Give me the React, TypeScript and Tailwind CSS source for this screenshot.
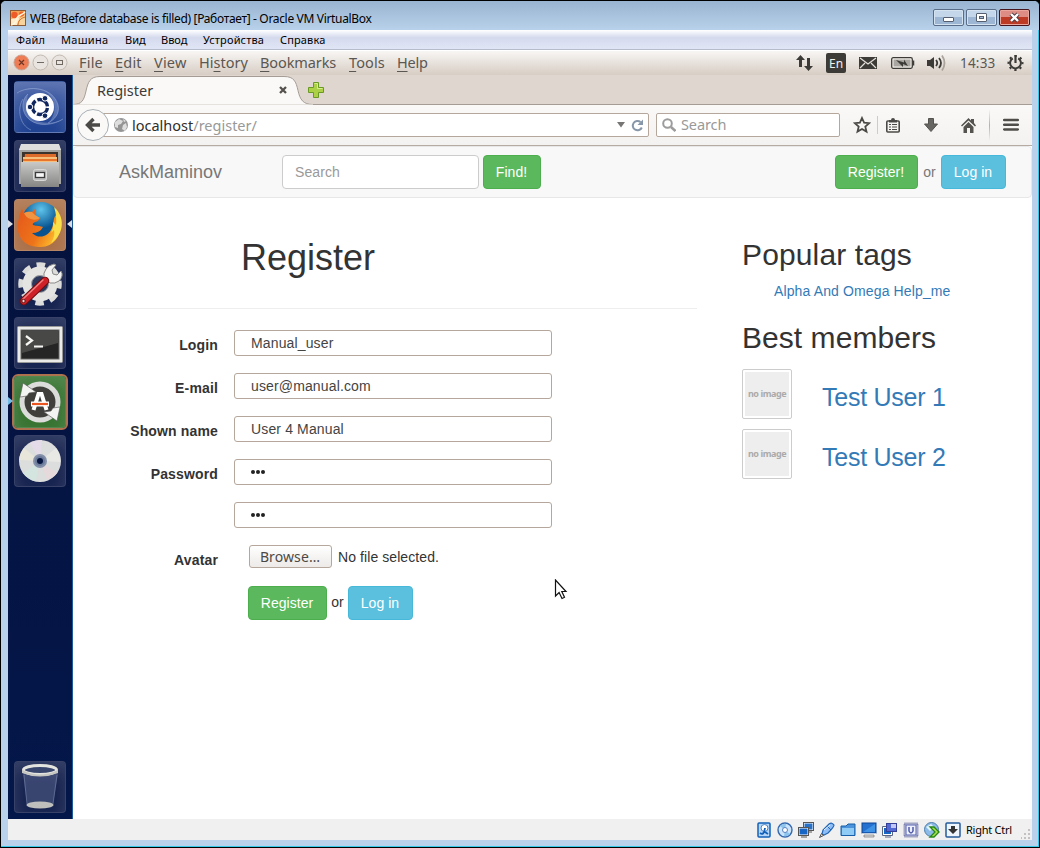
import type { ReactNode } from "react";

const ui = "font-['Noto_Sans',sans-serif]";
const page = "font-['Liberation_Sans',Arial,sans-serif]";

function TitleBar() {
  return (
    <div className="flex h-[29px] shrink-0 items-start bg-linear-to-b from-[#99b4d1] to-[#b9d1ea] pl-[9px] pr-[9px]">
      <svg className="mt-[9px] mr-[4px]" width="16" height="16" viewBox="0 0 16 16">
        <rect x=".5" y=".5" width="15" height="15" fill="#f3a557" stroke="#8c5a35" />
        <path d="M1 9v6h6l3-8z" fill="#fdeccb" />
        <path d="M8 15l2-7 5-3v10z" fill="#f9d39c" />
        <circle cx="4.500" cy="5" r="3.200" fill="#ef5b28" />
        <circle cx="11.500" cy="4" r="2.500" fill="#f0642c" />
        <path d="M1 15c5-1 5-4 6-7s4-2 8-6" stroke="#fff6dd" strokeWidth="1.500" fill="none" />
        <path d="M8 15q0-6 7-8" stroke="#d3762f" strokeWidth="1" fill="none" />
      </svg>
      <span className="mt-[9px] font-['Noto_Sans',sans-serif] text-[12px] leading-[17px] tracking-[-0.33px] whitespace-nowrap text-black">
        WEB (Before database is filled) [Работает] - Oracle VM VirtualBox
      </span>
      <div className="mt-[8px] ml-auto flex gap-[2px]">
        <div className="flex h-[17px] w-[31px] items-center justify-center rounded-[2px] border border-[#596d88] bg-linear-to-b from-[#c4d6e9] from-50% to-[#9cb6d3] to-50% shadow-[inset_0_0_0_1px_#d5e3f1]">
          <span className="mt-[4px] h-[5px] w-[11px] rounded-[1px] border border-[#555f70] bg-white" />
        </div>
        <div className="flex h-[17px] w-[31px] items-center justify-center rounded-[2px] border border-[#596d88] bg-linear-to-b from-[#c4d6e9] from-50% to-[#9cb6d3] to-50% shadow-[inset_0_0_0_1px_#d5e3f1]">
          <span className="flex h-[9px] w-[11px] items-center justify-center rounded-[1px] border border-[#555f70] bg-white">
            <span className="h-[3px] w-[5px] border border-[#555f70] bg-[#a5bdd8]" />
          </span>
        </div>
        <div className="flex h-[17px] w-[31px] items-center justify-center rounded-[2px] border border-[#46141c] bg-linear-to-b from-[#dd8d84] from-50% to-[#bd3b25] to-50% shadow-[inset_0_0_0_1px_#e9a79d]">
          <svg width="13" height="11" viewBox="0 0 13 11">
            <path d="M3 2l7 7M10 2l-7 7" stroke="#4b3a44" strokeWidth="4.200" />
            <path d="M3 2l7 7M10 2l-7 7" stroke="#fff" strokeWidth="2.400" />
          </svg>
        </div>
      </div>
    </div>
  );
}

function HostMenu() {
  return (
    <div className="flex h-[20px] shrink-0 border-b border-[#b6bccc] bg-linear-to-b from-white via-[#d4daed] via-40% to-[#e1e6f6] font-['Noto_Sans',sans-serif] text-[11px] leading-[19px] whitespace-nowrap text-black">
      <span className="ml-[8px] w-[45px] tracking-[0.2px]">Файл</span>
      <span className="w-[64px] tracking-[0.3px]">Машина</span>
      <span className="w-[36px]">Вид</span>
      <span className="w-[42px]">Ввод</span>
      <span className="w-[77px] tracking-[0.15px]">Устройства</span>
      <span className="tracking-[0.15px]">Справка</span>
    </div>
  );
}

function Menu({ k, rest, pre, w }: { k: string; rest: string; pre?: string; w: string }) {
  return (
    <span className={w}>
      {pre}
      <span className="underline decoration-1 underline-offset-[3px]">{k}</span>
      {rest}
    </span>
  );
}

function Panel() {
  return (
    <div className="flex h-[24px] shrink-0 items-center bg-linear-to-b from-[#f8f6f4] to-[#d7cdc4] text-[#5b5752]">
      <svg className="ml-[5px] shrink-0" width="56" height="18" viewBox="0 0 56 18">
        <circle cx="8.500" cy="8.500" r="7.500" fill="#ee7c55" stroke="#c9a596" />
        <path d="M6 6l5 5M11 6l-5 5" stroke="#713523" strokeWidth="1.200" />
        <circle cx="27.500" cy="8.500" r="7.500" fill="#e9e4df" stroke="#c2b9b0" />
        <path d="M24 8.500h7" stroke="#6f6962" />
        <circle cx="46.500" cy="8.500" r="7.500" fill="#e9e4df" stroke="#c2b9b0" />
        <rect x="43.500" y="6.500" width="6" height="4" fill="none" stroke="#6f6962" />
      </svg>
      <div className={`${ui} mb-[2px] ml-[10px] flex text-[14.500px] leading-[20px] whitespace-nowrap`}>
        <Menu k="F" rest="ile" w="w-[36px] tracking-[0.2px]" />
        <Menu k="E" rest="dit" w="w-[39px] tracking-[0.2px]" />
        <Menu k="V" rest="iew" w="w-[45px] tracking-[0.2px]" />
        <Menu pre="Hi" k="s" rest="tory" w="w-[61px]" />
        <Menu k="B" rest="ookmarks" w="w-[89px] tracking-[-0.1px]" />
        <Menu k="T" rest="ools" w="w-[48px] tracking-[0.1px]" />
        <Menu k="H" rest="elp" w="w-[34px] tracking-[-0.2px]" />
      </div>
      <svg className="-mr-[1px] ml-auto" width="19" height="18" viewBox="0 0 19 18">
        <path d="M5.500 1L1 6h3v7h3V6h3zM13.500 17l4.500-5h-3V4h-3v8H9z" fill="#3c3b37" />
      </svg>
      <span className={`${ui} ml-[13px] h-[20px] w-[20px] rounded-[2px] bg-[#3c3b37] text-center text-[12px] leading-[21px] text-[#f2f0ee]`}>En</span>
      <svg className="ml-[13px]" width="18" height="12" viewBox="0 0 18 12">
        <rect width="18" height="12" fill="#3c3b37" />
        <path d="M1 1l8 6 8-6M1 11l5-5M17 11l-5-5" stroke="#e5dfda" strokeWidth="1.200" fill="none" />
      </svg>
      <svg className="ml-[14px]" width="24" height="12" viewBox="0 0 24 12">
        <rect x=".7" y=".7" width="20.600" height="10.600" rx="1.500" fill="#f4f1ed" stroke="#3c3b37" strokeWidth="1.300" />
        <path d="M2.500 2.500h17v7h-17z" fill="#aaa6a1" />
        <path d="M5 3l8 2.500V2.500L17 9l-5-2v3z" fill="#3c3b37" />
        <path d="M22.500 3.500v5" stroke="#3c3b37" strokeWidth="1.500" />
      </svg>
      <svg className="ml-[12px]" width="20" height="18" viewBox="0 0 20 18">
        <path d="M0 6h3l4-3v12l-4-3H0z" fill="#3c3b37" />
        <path d="M9 6q2.500 3 0 6M12 4q4 5 0 10" stroke="#3c3b37" strokeWidth="1.800" fill="none" />
        <path d="M15 1.500q5 7.500 0 15" stroke="#aaa49d" strokeWidth="1.800" fill="none" />
      </svg>
      <span className={`${ui} mb-[1px] ml-[13px] w-[36px] text-[13.500px] leading-[20px] tracking-[0.2px]`}>14:33</span>
      <svg className="mr-[8px] ml-[11px]" width="17" height="18" viewBox="0 0 17 18">
        <circle cx="8.500" cy="9" r="7" fill="none" stroke="#3c3b37" strokeWidth="2" strokeDasharray="2.200 3.300" strokeDashoffset="1.100" />
        <path d="M5.800 4.300a5.400 5.400 0 1 0 5.400 0" fill="none" stroke="#3c3b37" strokeWidth="2" />
        <path d="M8.500 1v8" stroke="#3c3b37" strokeWidth="2.200" />
      </svg>
    </div>
  );
}

function Tile({ children, bg = "bg-[#16224f]", glow = "" }: { children: ReactNode; bg?: string; glow?: string }) {
  return (
    <div className={`${bg} ${glow} flex h-[52px] w-[52px] shrink-0 items-center justify-center rounded-[4px] border border-white/15 shadow-[inset_0_8px_16px_rgba(255,255,255,0.14)]`}>
      {children}
    </div>
  );
}

function Launcher() {
  return (
    <div className="relative flex w-[65px] shrink-0 flex-col items-center gap-[7px] border-r border-[#1b5b9a] bg-linear-to-b from-[#04103a] to-[#04174a] pt-[6px] pb-[6px]">
      <Tile bg="bg-linear-to-b from-[#4963a8] to-[#1c3f90]">
        <svg width="50" height="50" viewBox="0 0 50 50">
          <path d="M2 11C14 3 38 5 43 23c2 9-4 15-10 18 9-8 9-24-2-31C22 5 9 7 2 11zM48 37c-9 6-24 8-33 1C7 32 5 19 13 12c-3 12 2 25 13 28 8 2 16 0 22-3z" fill="#a6b8df" opacity=".35" />
          <path d="M2 11C14 3 38 5 43 23c2 9-4 15-10 18M48 37c-9 6-24 8-33 1C7 32 5 19 13 12M16 48C4 43 2 26 8 17" stroke="#9fb3de" strokeOpacity=".5" fill="none" />
          <circle cx="25" cy="25" r="14" fill="#fff" />
          <circle cx="25" cy="25" r="7.500" fill="none" stroke="#10265e" strokeWidth="3.400" strokeDasharray="13.700 2" strokeDashoffset="-1" />
          <g fill="#10265e" stroke="#fff">
            <circle cx="15" cy="25" r="2.800" />
            <circle cx="30" cy="16.300" r="2.800" />
            <circle cx="30" cy="33.700" r="2.800" />
          </g>
        </svg>
      </Tile>
      <Tile>
        <svg width="50" height="50" viewBox="0 0 50 50">
          <path d="M6 4h38l2 5v34H4V9z" fill="#a3a4a2" />
          <path d="M6 3h38l2 6H4z" fill="#dedfdd" />
          <path d="M7 11h36v12H7z" fill="#3d332d" />
          <path d="M10 13h31v9H9z" fill="#df6b2b" />
          <path d="M8 16h34v6H8z" fill="#f6c07c" />
          <path d="M8 18h34v2H8z" fill="#e9752d" />
          <path d="M6 21h38v25H6z" fill="url(#cab)" />
          <rect x="18.500" y="28.500" width="13" height="11" rx="2" fill="#bbb" stroke="#d9d9d7" />
          <rect x="20.500" y="31.500" width="9" height="5" fill="#f8f8f8" stroke="#3c3c3c" strokeWidth="1.300" />
          <defs>
            <linearGradient id="cab" x2="0" y2="1"><stop stopColor="#c9c9c7" /><stop offset="1" stopColor="#858684" /></linearGradient>
          </defs>
        </svg>
      </Tile>
      <Tile bg="bg-[#ab7048]">
        <svg width="50" height="50" viewBox="0 0 50 50">
          <defs>
            <radialGradient id="globe" cx=".5" cy=".2"><stop stopColor="#5fc5ec" /><stop offset="1" stopColor="#07528f" /></radialGradient>
            <linearGradient id="fox" x2="1" y2=".5"><stop stopColor="#e4571c" /><stop offset=".65" stopColor="#ed7419" /><stop offset="1" stopColor="#fbb42a" /></linearGradient>
          </defs>
          <circle cx="26" cy="21" r="19" fill="url(#globe)" />
          <path d="M4 18C4 15 6 11 7 9l2 4q4-2 8-1l4-4-1 7 5 3q-1 3-5 4-3 1-2 3 3 1 6 1l4 1q-3 6-11 6c7 7 17 3 20-5 2-5 1-10 4-13 8 11 4 31-15 32C8 48-1 34 4 18z" fill="url(#fox)" />
          <path d="M39 7c11 9 11 27-3 36 3-5 4-9 3-13l-3 3q3-6 2-11l3 3q1-9-2-18z" fill="#fbdf4a" />
          <path d="M9 13q4-2 8-1l3 3 5 3q-4 3-9 1-5-1-7-6z" fill="#f29543" />
        </svg>
      </Tile>
      <Tile>
        <svg width="50" height="50" viewBox="0 0 50 50">
          <circle cx="25" cy="25" r="19" fill="none" stroke="#dcdddb" strokeWidth="5.500" strokeDasharray="8.500 6.420" strokeDashoffset="4" />
          <circle cx="25" cy="25" r="13" fill="none" stroke="#e4e4e2" strokeWidth="9" />
          <circle cx="25" cy="25" r="8.500" fill="#2c375c" stroke="#aaa" />
          <path d="M29 19q-1-5 2-9t8-5l2 1-4 5 1 4 4 1 4-4q3 5-2 10-4 3-9 2z" fill="#f2f2f0" stroke="#898a88" />
          <path d="M9 42L30 22" stroke="#6e0e12" strokeWidth="8.500" strokeLinecap="round" />
          <path d="M9 42L30 22" stroke="#cf2228" strokeWidth="6.500" strokeLinecap="round" />
          <path d="M8 40L28 21" stroke="#f18182" strokeWidth="1.500" strokeLinecap="round" />
          <circle cx="8.500" cy="42" r="1.700" fill="#f0dada" stroke="#631013" />
        </svg>
      </Tile>
      <Tile>
        <svg width="50" height="50" viewBox="0 0 50 50">
          <rect x="2.500" y="8.500" width="45" height="36" rx="1" fill="#eaeae8" stroke="#999" />
          <rect x="6" y="12" width="38" height="29" fill="#252525" stroke="#666" />
          <path d="M7 13h36v12L7 35z" fill="#484846" />
          <path d="M11 18l6 4.500-6 4.500M19 28.500h9" stroke="#f6f6f4" strokeWidth="2.200" fill="none" />
        </svg>
      </Tile>
      <Tile bg="bg-[#377331]" glow="outline-2 outline-[#d88951]/80">
        <svg width="50" height="50" viewBox="0 0 50 50">
          <circle cx="25" cy="25" r="16" fill="#403f3c" />
          <circle cx="25" cy="25" r="18" fill="none" stroke="#dcdcda" strokeWidth="5" />
          <path d="M5 20L8 6l13 9-7 1-2 3z" fill="#f4f4f2" stroke="#555" strokeWidth=".6" />
          <path d="M45 30l-3 14-13-9 7-1 2-3z" fill="#f4f4f2" stroke="#555" strokeWidth=".6" />
          <path d="M18.500 33l5-16h3l5 16" fill="none" stroke="#fff" strokeWidth="4" />
          <path d="M16 27h18" stroke="#fff" strokeWidth="5" />
          <path d="M17 27h16" stroke="#ea5722" strokeWidth="2.200" />
        </svg>
      </Tile>
      <Tile>
        <svg width="50" height="50" viewBox="0 0 50 50">
          <circle cx="25" cy="25" r="21" fill="#dcdddd" />
          <path d="M25 25L15 7q5-3 12-3z" fill="#e4dce8" />
          <path d="M25 25L9 12q-4 5-5 12z" fill="#e8e5da" />
          <path d="M25 25L8 37q5 7 13 8z" fill="#d4e4df" />
          <path d="M25 25l17 12q-4 5-10 7z" fill="#e5d9dc" />
          <path d="M25 25L41 12q5 7 4 14z" fill="#e8e9e4" />
          <circle cx="25" cy="25" r="7" fill="#8490aa" />
          <circle cx="25" cy="25" r="5" fill="#6d7b9b" />
          <circle cx="25" cy="25" r="3" fill="#071640" />
        </svg>
      </Tile>
      <div className="mt-auto">
        <Tile>
          <svg width="50" height="50" viewBox="0 0 50 50">
            <path d="M8 11h35l-5 32H12z" fill="#8290b4" opacity=".32" />
            <path d="M9 13l3 29M42 13l-4 29" stroke="#8190b4" opacity=".5" fill="none" />
            <ellipse cx="25" cy="43" rx="13.500" ry="3.500" fill="#bfc0bd" />
            <ellipse cx="25" cy="8" rx="16.500" ry="4.500" fill="#38456d" stroke="#e4e4df" strokeWidth="3" />
            <path d="M7 8q18 9 36 0v3q-18 7-36 0z" fill="#c6c7c2" />
          </svg>
        </Tile>
      </div>
      <span className="absolute top-[145px] left-0 border-y-4 border-l-5 border-y-transparent border-l-[#d9dde5]" />
      <span className="absolute top-[145px] right-0 border-y-4 border-r-5 border-y-transparent border-r-[#d9dde5]" />
      <span className="absolute top-[322px] left-0 border-y-4 border-l-5 border-y-transparent border-l-[#72bde7]" />
    </div>
  );
}

function TabStrip() {
  return (
    <div className="relative h-[30px] shrink-0 border-b border-[#a59d95] bg-[#dfd6cf]">
      <svg className="absolute top-0 left-0" width="245" height="30" viewBox="0 0 245 30">
        <path d="M0 29.500C9 29.500 11 25 13 16S17 1.500 27 1.500H211c10 0 12 5 14 14s5 14 15 14" fill="#faf9f7" stroke="#a59d95" />
        <path d="M0 30h240" stroke="#faf9f7" />
      </svg>
      <div className="relative flex h-full items-center">
        <span className={`${ui} ml-[24px] w-[182px] text-[14.500px] leading-[20px] text-[#3c3b37]`}>Register</span>
        <svg width="8" height="8" viewBox="0 0 8 8"><path d="M1 1l6 6M7 1L1 7" stroke="#55524e" strokeWidth="2.300" /></svg>
        <svg className="mt-px ml-[21px]" width="16" height="16" viewBox="0 0 16 16">
          <path d="M5.500.5h5v5h5v5h-5v5h-5v-5h-5v-5h5z" fill="#acd046" stroke="#6b9a24" />
          <path d="M6.500 1.500h3v5h5" stroke="#d7eb92" fill="none" />
        </svg>
      </div>
    </div>
  );
}

function NavBar() {
  return (
    <div className="flex h-[41px] shrink-0 items-center border-b border-[#b5aba2] bg-linear-to-b from-[#faf9f7] to-[#f4f2f0]">
      <div className="z-10 ml-[4px] flex h-[32px] w-[32px] shrink-0 items-center justify-center rounded-full border border-[#a9b1b7] bg-[#faf9f7]">
        <svg width="16" height="16" viewBox="0 0 16 16"><path d="M15 8H3M8.500 2l-6 6 6 6" stroke="#4b4a47" strokeWidth="3.400" fill="none" /></svg>
      </div>
      <div className={`${ui} -ml-[6px] flex h-[24px] w-[546px] items-center rounded-r-[2px] border border-[#b5a79b] bg-white text-[14.500px]`}>
        <svg className="ml-[10px]" width="14" height="14" viewBox="0 0 14 14">
          <circle cx="7" cy="7" r="7" fill="#959595" />
          <path d="M1 4l4-3 4 2-2 3-3 1v3L1 9zM9 7l3-2 1 4-2 4-3-2zM9 1l3 2-2 1z" fill="#dedede" />
        </svg>
        <span className="ml-[4px] leading-[20px] text-[#2f2e2b]">localhost<span className="text-[#999]">/register/</span></span>
        <svg className="ml-auto" width="8" height="6" viewBox="0 0 8 6"><path d="M0 0h8L4 5.500z" fill="#777674" /></svg>
        <svg className="mr-[4px] ml-[6px]" width="13" height="13" viewBox="0 0 13 13">
          <path d="M10.800 8.500A4.700 4.700 0 1 1 9.500 3" fill="none" stroke="#8796a8" strokeWidth="2" />
          <path d="M12 .5v5.500H6.500z" fill="#8796a8" />
        </svg>
      </div>
      <div className={`${ui} ml-[7px] flex h-[24px] w-[184px] items-center rounded-[2px] border border-[#b5a79b] bg-white text-[14.500px] tracking-[-0.1px] text-[#999]`}>
        <svg className="mr-[5px] ml-[5px]" width="14" height="14" viewBox="0 0 14 14"><circle cx="5.500" cy="5.500" r="4.300" fill="none" stroke="#9c9c9c" strokeWidth="2" /><path d="M9 9l4.500 4" stroke="#9c9c9c" strokeWidth="2.600" /></svg>
        Search
      </div>
      <svg className="ml-[13px]" width="18" height="18" viewBox="0 0 18 18"><path d="M9 2l2.100 4.700 5.100.5-3.900 3.400 1.200 5L9 13l-4.500 2.600 1.200-5-3.900-3.400 5.100-.5z" fill="none" stroke="#4b4a47" strokeWidth="1.800" /></svg>
      <span className="ml-[6px] h-[18px] w-px bg-[#cfcbc8]" />
      <svg className="ml-[8px]" width="14" height="15" viewBox="0 0 14 15">
        <rect x=".8" y="3" width="12.400" height="11" rx="1" fill="#f6f4f2" stroke="#4b4a47" strokeWidth="1.600" />
        <path d="M3 4.500h8V2H9a2 2 0 0 0-4 0H3z" fill="#4b4a47" />
        <path d="M3 6.500h2M6 6.500h5M3 9h2M6 9h5M3 11.500h2M6 11.500h5" stroke="#4b4a47" strokeWidth="1.200" />
      </svg>
      <svg className="ml-[24px]" width="14" height="14" viewBox="0 0 14 14"><path d="M4.500.5h5V6h4L7 13.500.5 6h4z" fill="#686663" stroke="#55534f" /></svg>
      <svg className="ml-[23px]" width="15" height="15" viewBox="0 0 15 15"><path d="M7.500 0L10 2.500V1h3v4l2 2.500-1 1-6.500-6-6.500 6-1-1zM2.500 9l5-5 5 5v6H9v-5H6v5H2.500z" fill="#55534f" /></svg>
      <span className="ml-[13px] h-[31px] w-px bg-linear-to-b from-[#f5f3f1] via-[#a9b3bf] to-[#f5f3f1]" />
      <svg className="ml-[13px]" width="16" height="14" viewBox="0 0 16 14"><path d="M1.200 2h13.600M1.200 6.700h13.600M1.200 11.400h13.600" stroke="#4f4d4a" strokeWidth="2.500" strokeLinecap="round" /></svg>
    </div>
  );
}

const btn = "flex h-[34px] shrink-0 items-center justify-center rounded-[4px] border pr-px text-[14px] leading-[20px] text-white tracking-[0.05px]";
const green = "border-[#4cae4c] bg-[#5cb85c]";
const cyan = "border-[#46b8da] bg-[#5bc0de]";

function Field({ label, value }: { label: string; value: string }) {
  return (
    <div className="mb-[17px] flex h-[26px]">
      <label className="mr-[16px] w-[145px] pt-[5px] text-right leading-[20px] font-bold tracking-[0.15px]">{label}</label>
      <div className="w-[318px] rounded-[3px] border border-[#b5a79b] pl-[16px] leading-[24px] tracking-[0.14px] text-[#444]">
        {value === "dots" ? (
          <span className="flex h-[24px] items-center gap-[1px] pb-[1px]">
            <i className="h-1 w-1 rounded-full bg-[#222]" />
            <i className="h-1 w-1 rounded-full bg-[#222]" />
            <i className="h-1 w-1 rounded-full bg-[#222]" />
          </span>
        ) : value}
      </div>
    </div>
  );
}

function Member({ name }: { name: string }) {
  return (
    <div className="mb-[10px] flex h-[50px]">
      <div className="h-[50px] w-[50px] rounded-[2px] border border-[#ccc] p-[2px]">
        <div className="flex h-full items-center justify-center bg-[#eee] font-['Noto_Sans',sans-serif] text-[9px] font-bold tracking-[-0.45px] whitespace-nowrap text-[#aaa]">no image</div>
      </div>
      <span className="ml-[30px] pt-[13px] text-[25px] leading-[30px] tracking-[-0.25px] whitespace-nowrap text-[#337ab7]">{name}</span>
    </div>
  );
}

function Site() {
  return (
    <div className={`${page} flex flex-1 flex-col bg-white text-[14px] text-[#333]`}>
      <div className="flex h-[52px] shrink-0 items-center rounded-[4px] border border-[#e7e7e7] bg-[#f8f8f8] text-[#777]">
        <span className="ml-[45px] w-[163px] text-[18px]">AskMaminov</span>
        <div className="h-[34px] w-[197px] rounded-[4px] border border-[#ccc] bg-white pl-[12px] leading-[32px] tracking-[0.1px] text-[#999]">Search</div>
        <span className={`${btn} ${green} ml-[4px] w-[58px]`}>Find!</span>
        <span className={`${btn} ${green} ml-auto w-[83px]`}>Register!</span>
        <span className="w-[23px] text-center">or</span>
        <span className={`${btn} ${cyan} mr-[25px] w-[65px]`}>Log in</span>
      </div>
      <div className="flex">
        <div className="ml-[15px] w-[609px]">
          <h1 className="h-[111px] border-b border-[#eee] pt-[40px] pl-[153px] text-[36px] leading-[40px]">Register</h1>
          <div className="-ml-[15px] pt-[21px]">
            <Field label="Login" value="Manual_user" />
            <Field label="E-mail" value="user@manual.com" />
            <Field label="Shown name" value="User 4 Manual" />
            <Field label="Password" value="dots" />
            <Field label="" value="dots" />
            <div className="flex h-[26px]">
              <label className="mr-[31px] w-[145px] pt-[5px] text-right leading-[20px] font-bold tracking-[0.15px]">Avatar</label>
              <span className="h-[23px] w-[83px] rounded-[3px] border border-[#b5a79b] bg-linear-to-b from-white to-[#edeae8] pr-px text-center font-['Noto_Sans',sans-serif] text-[14px] leading-[22px] tracking-[0.1px] text-[#4c4945]">Browse…</span>
              <span className="ml-[6px] leading-[24px] tracking-[0.08px]">No file selected.</span>
            </div>
            <div className="mt-[15px] ml-[175px] flex items-center">
              <span className={`${btn} ${green} w-[79px]`}>Register</span>
              <span className="w-[21px] pb-px text-center">or</span>
              <span className={`${btn} ${cyan} w-[65px]`}>Log in</span>
            </div>
          </div>
        </div>
        <div className="ml-[45px] pt-[40px]">
          <h2 className="text-[30px] leading-[33px] tracking-[0.13px] whitespace-nowrap">Popular tags</h2>
          <div className="ml-[32px] flex h-[40px] gap-[4px] pt-[10px] leading-[20px] tracking-[0.13px] whitespace-nowrap text-[#337ab7]">
            <span>Alpha And Omega</span><span>Help_me</span>
          </div>
          <h2 className="mt-[10px] mb-[15px] text-[30px] leading-[33px] tracking-[0.05px] whitespace-nowrap">Best members</h2>
          <Member name="Test User 1" />
          <Member name="Test User 2" />
        </div>
      </div>
    </div>
  );
}

function StatusBar() {
  return (
    <div className="flex h-[21px] shrink-0 items-center justify-end bg-[#f0f0f0]">
      <div className="flex gap-[5px]">
        <svg width="16" height="16" viewBox="0 0 16 16"><rect x="2" y="1" width="12" height="14" rx="1" fill="#b5d6f8" stroke="#1260b8" strokeWidth="1.500" /><circle cx="8.500" cy="6" r="3.500" fill="#fff" stroke="#4d83be" /><path d="M4 11q4 3 5-5M9 10l3 2" fill="none" stroke="#1260b8" strokeWidth="1.800" /></svg>
        <svg width="16" height="16" viewBox="0 0 16 16"><circle cx="8" cy="8" r="7" fill="#cae5fb" stroke="#3568af" strokeWidth="1.400" /><path d="M8 8L3 4q3-3 6-2zM8 8l5 4q-3 3-6 2z" fill="#8dc4ed" /><circle cx="8" cy="8" r="2.500" fill="#fff" stroke="#5883bf" /></svg>
        <svg width="16" height="16" viewBox="0 0 16 16"><rect x="6" y="1" width="9" height="7" fill="#2871c8" stroke="#fff" /><rect x="5.500" y=".5" width="10" height="8" fill="none" stroke="#555" /><path d="M10 10h4" stroke="#555" /><rect x="1" y="6" width="9" height="7" fill="#1765c5" stroke="#fff" /><rect x=".5" y="5.500" width="10" height="8" fill="none" stroke="#555" /><path d="M3 15h6" stroke="#555" /></svg>
        <svg width="16" height="16" viewBox="0 0 16 16"><path d="M3 12l1-4 6-6q3-2 5 1 0 2-6 8l-4 2z" fill="#8ebef5" stroke="#2466b6" strokeWidth="1.200" /><path d="M8 4l4 4" stroke="#2466b6" /><path d="M5 8l6-5" stroke="#e3f1ff" /><path d="M.5 15.500l2-4 2 2z" fill="#ddd" stroke="#555" /></svg>
        <svg width="16" height="16" viewBox="0 0 16 16"><path d="M1 13.500V4h5l2-2h7v11.500z" fill="#4b93da" stroke="#195ea9" /><path d="M2 6h12v7H2z" fill="#90cbf5" /></svg>
        <svg width="16" height="16" viewBox="0 0 16 16"><rect x="1" y="1" width="14" height="10" fill="#2470d0" stroke="#0d4594" /><path d="M2 10L14 2v8z" fill="#3d92e5" /><path d="M1 12h14" stroke="#fff" /><path d="M3 13h10v2H3z" fill="#ddd" stroke="#777" strokeWidth=".7" /></svg>
        <svg width="16" height="16" viewBox="0 0 16 16"><path d="M.5 4.500h10v9H.500zM3 15h6" fill="#fff" stroke="#5b6685" /><rect x="2" y="6" width="7" height="6" fill="#1765c5" /><rect x="4.500" y="1.500" width="10" height="8" fill="#5368d2" stroke="#353f95" /><path d="M9 2v4h5V2z" fill="#c1c8f8" /></svg>
        <svg width="16" height="16" viewBox="0 0 16 16"><rect x="1.500" y="1.500" width="13" height="13" fill="none" stroke="#555c9b" strokeWidth="2" strokeDasharray="1 1" /><rect x="3" y="3" width="10" height="10" fill="#edf1ff" stroke="#5561ae" /><path d="M6 5v4q2 4 4 0V5" fill="none" stroke="#4c59a6" strokeWidth="1.500" /></svg>
        <svg width="16" height="16" viewBox="0 0 16 16"><circle cx="7.500" cy="7.500" r="7" fill="#8cbbe7" stroke="#4f7fac" /><path d="M2 5l5-3 3 3-4 4z" fill="#e3f3ff" /><path d="M6 5h4l5 5-5 5H6l5-5z" fill="#a8df4d" stroke="#248519" strokeWidth="1.300" /></svg>
        <svg width="16" height="16" viewBox="0 0 16 16"><rect x="1" y="1" width="14" height="14" rx="1" fill="#edf4fc" stroke="#245999" strokeWidth="1.500" /><path d="M6 4h4v3h3l-5 5-5-5h3z" fill="#333" /></svg>
      </div>
      <span className="ml-[5px] w-[47px] font-['Noto_Sans',sans-serif] text-[11px] leading-[20px] tracking-[-0.25px] whitespace-nowrap text-black">Right Ctrl</span>
      <svg className="mt-[8px] mr-[1px] ml-[8px]" width="10" height="10" viewBox="0 0 10 10"><path d="M7 0h2v2H7zM7 4h2v2H7zM7 8h2v2H7zM3 4h2v2H3zM3 8h2v2H3zM0 8h1v2H0z" fill="#c2c2c2" /></svg>
    </div>
  );
}

export default function App() {
  return (
    <div className="relative h-[848px] w-[1040px] overflow-hidden bg-black">
      <div className="flex h-[848px] w-[1040px] flex-col overflow-hidden rounded-t-[6px] border border-black bg-[#b9d1ea] shadow-[inset_-1px_-1px_0_#35c8e8]">
        <TitleBar />
        <div className="mr-[7px] ml-[7px] flex h-[810px] flex-col">
          <HostMenu />
          <div className="h-px shrink-0 bg-white" />
          <Panel />
          <div className="flex h-[744px] shrink-0">
            <Launcher />
            <div className="flex min-w-0 flex-1 flex-col">
              <TabStrip />
              <NavBar />
              <Site />
            </div>
          </div>
          <StatusBar />
        </div>
      </div>
      <svg className="absolute top-[579px] left-[554px]" width="15" height="21" viewBox="0 0 15 21">
        <path d="M1.500 1v16l3.600-3.500L8 19.500l2.500-1.200-2.700-5.800H12z" fill="#fff" stroke="#111" strokeWidth="1.200" />
      </svg>
    </div>
  );
}
